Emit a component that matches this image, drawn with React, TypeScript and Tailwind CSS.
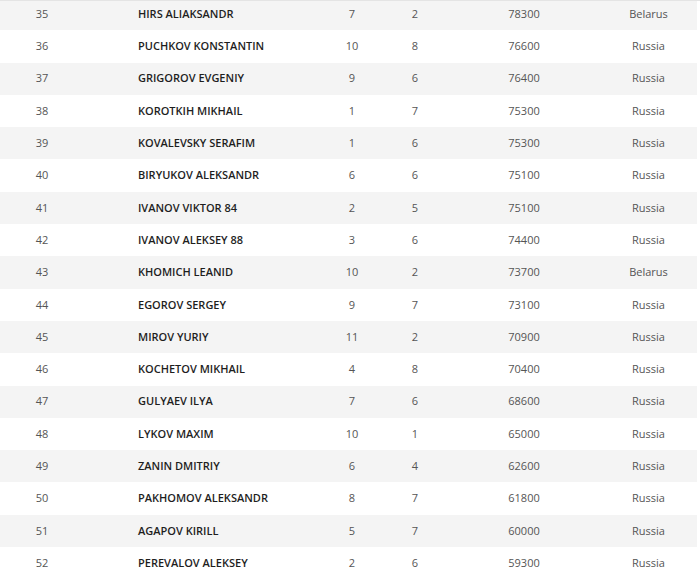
const rows: [number, string, number, number, number, string][] = [
  [35, "HIRS ALIAKSANDR", 7, 2, 78300, "Belarus"],
  [36, "PUCHKOV KONSTANTIN", 10, 8, 76600, "Russia"],
  [37, "GRIGOROV EVGENIY", 9, 6, 76400, "Russia"],
  [38, "KOROTKIH MIKHAIL", 1, 7, 75300, "Russia"],
  [39, "KOVALEVSKY SERAFIM", 1, 6, 75300, "Russia"],
  [40, "BIRYUKOV ALEKSANDR", 6, 6, 75100, "Russia"],
  [41, "IVANOV VIKTOR 84", 2, 5, 75100, "Russia"],
  [42, "IVANOV ALEKSEY 88", 3, 6, 74400, "Russia"],
  [43, "KHOMICH LEANID", 10, 2, 73700, "Belarus"],
  [44, "EGOROV SERGEY", 9, 7, 73100, "Russia"],
  [45, "MIROV YURIY", 11, 2, 70900, "Russia"],
  [46, "KOCHETOV MIKHAIL", 4, 8, 70400, "Russia"],
  [47, "GULYAEV ILYA", 7, 6, 68600, "Russia"],
  [48, "LYKOV MAXIM", 10, 1, 65000, "Russia"],
  [49, "ZANIN DMITRIY", 6, 4, 62600, "Russia"],
  [50, "PAKHOMOV ALEKSANDR", 8, 7, 61800, "Russia"],
  [51, "AGAPOV KIRILL", 5, 7, 60000, "Russia"],
  [52, "PEREVALOV ALEKSEY", 2, 6, 59300, "Russia"],
];

export default function App() {
  return (
    <div className="w-[700px] h-[578px] overflow-hidden bg-white border-t border-[#e4e4e4] font-['Open_Sans',sans-serif] text-[11px] text-[#555]">
      <div className="-mt-[3px] w-[697px]">
        {rows.map(([rank, name, a, b, pts, country], i) => (
          <div
            key={rank}
            className={`flex items-center h-[32.3px] ${i % 2 === 0 ? "bg-[#f4f4f4]" : "bg-white"}`}
          >
            <div className="w-[84px] text-center">{rank}</div>
            <div className="w-[238px] pl-[54px] font-semibold text-[#1e1e1e]">{name}</div>
            <div className="w-[60px] text-center">{a}</div>
            <div className="w-[66px] text-center">{b}</div>
            <div className="w-[152px] text-center">{pts}</div>
            <div className="w-[97px] text-center">{country}</div>
          </div>
        ))}
      </div>
    </div>
  );
}
